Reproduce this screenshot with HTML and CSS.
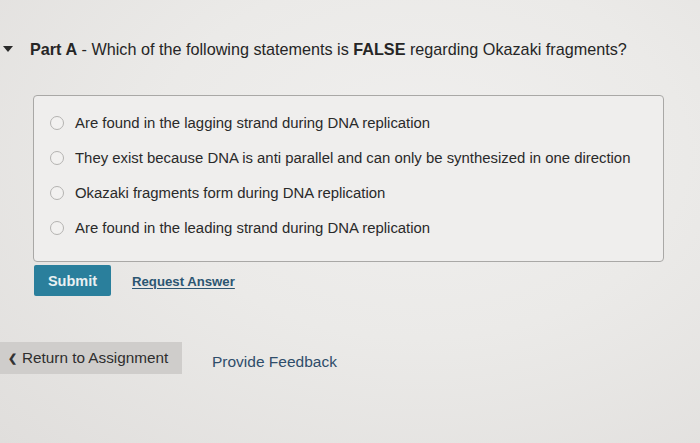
FILE: index.html
```html
<!DOCTYPE html>
<html>
<head>
<meta charset="utf-8">
<link rel="stylesheet" href="styles.css">
</head>
<body>
<div class="page">
  <div class="title-row">
    <span class="caret"></span>
    <h1 class="title"><b>Part A</b> - Which of the following statements is <b>FALSE</b> regarding Okazaki fragments?</h1>
  </div>
  <div class="choices">
    <label class="choice"><span class="radio"></span><span>Are found in the lagging strand during DNA replication</span></label>
    <label class="choice"><span class="radio"></span><span>They exist because DNA is anti parallel and can only be synthesized in one direction</span></label>
    <label class="choice"><span class="radio"></span><span>Okazaki fragments form during DNA replication</span></label>
    <label class="choice"><span class="radio"></span><span>Are found in the leading strand during DNA replication</span></label>
  </div>
  <div class="actions">
    <button class="submit">Submit</button>
    <a class="request">Request Answer</a>
  </div>
  <div class="footer">
    <div class="return"><span class="chev">&#10094;</span>Return to Assignment</div>
    <a class="feedback">Provide Feedback</a>
  </div>
</div>
</body>
</html>
```

FILE: styles.css
```css
html, body {
  margin: 0;
  padding: 0;
}
body {
  width: 700px;
  height: 443px;
  overflow: hidden;
  font-family: "Liberation Sans", Arial, sans-serif;
  background: radial-gradient(ellipse at 60% 35%, #f0efee 0%, #ebeae8 45%, #e0dedc 100%);
  color: #262626;
}
.page {
  padding-top: 39px;
}
.title-row {
  display: flex;
  align-items: center;
  height: 20px;
}
.caret {
  width: 0;
  height: 0;
  margin-left: 3px;
  margin-right: 17px;
  border-left: 5px solid transparent;
  border-right: 5px solid transparent;
  border-top: 6px solid #2a2a2a;
}
.title {
  margin: 0;
  font-size: 16.2px;
  font-weight: normal;
  line-height: 20px;
  color: #262626;
}
.title b {
  font-weight: bold;
}
.choices {
  margin: 36px 0 0 33px;
  border: 1px solid #a9a8a6;
  border-radius: 4px;
  background: #efeeed;
  padding-top: 9px;
  box-sizing: border-box;
  height: 167px;
  width: 631px;
}
.choice {
  display: flex;
  align-items: center;
  height: 35px;
  padding-left: 16px;
  font-size: 14.9px;
  color: #2a2a2a;
}
.radio {
  width: 12px;
  height: 12px;
  border: 1.5px solid #b4b3b1;
  border-radius: 50%;
  background: #f2f1f0;
  margin-right: 11px;
  flex-shrink: 0;
}
.actions {
  display: flex;
  align-items: center;
  margin: 3px 0 0 34px;
}
.submit {
  width: 77px;
  height: 31px;
  border: none;
  border-radius: 2px;
  background: #2a7f9c;
  color: #e9f0f2;
  font-family: "Liberation Sans", Arial, sans-serif;
  font-weight: bold;
  font-size: 14.5px;
  padding: 0;
}
.request {
  margin-left: 21px;
  margin-top: 2px;
  font-weight: bold;
  font-size: 13.2px;
  color: #2c5672;
  text-decoration: underline;
  text-underline-offset: 2px;
}
.footer {
  display: flex;
  align-items: center;
  margin-top: 46px;
}
.return {
  width: 182px;
  height: 32px;
  box-sizing: border-box;
  background: #cfcdcb;
  display: flex;
  align-items: center;
  padding-left: 8px;
  font-size: 15.3px;
  color: #2e2e2e;
}
.chev {
  font-size: 11px;
  font-weight: bold;
  margin-right: 5px;
  color: #333;
}
.feedback {
  margin-left: 30px;
  margin-top: 7px;
  font-size: 15.5px;
  color: #2f4d6a;
}
```
